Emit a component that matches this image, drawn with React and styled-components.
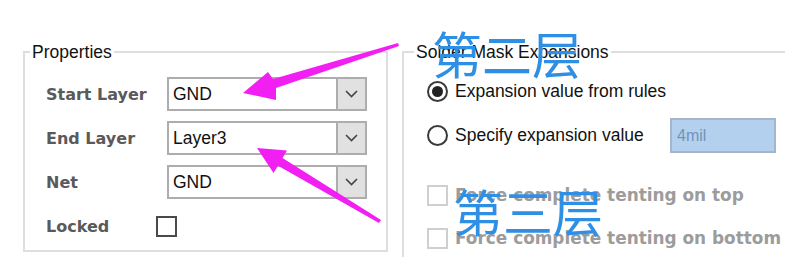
import React from 'react';
import styled, { createGlobalStyle } from 'styled-components';

const GlobalStyle = createGlobalStyle`
	html, body {
		margin: 0;
		padding: 0;
		background: #ffffff;
	}
	body {
		font-family: "Liberation Sans", Arial, sans-serif;
		overflow: hidden;
	}
`;

const Page = styled.div`
	position: relative;
	width: 785px;
	height: 264px;
	display: flex;
	gap: 14px;
	padding: 51px 0 0 23px;
	box-sizing: border-box;
	overflow: hidden;
`;

const GroupBox = styled.div`
	flex: none;
	display: flex;
	flex-direction: column;
	box-sizing: border-box;
	width: ${p => p.width}px;
	height: ${p => p.height}px;
	border: 2px solid #dedede;
	border-right: ${p => (p.open ? 'none' : '2px solid #dedede')};
	border-bottom: ${p => (p.open ? 'none' : '2px solid #dedede')};
`;

const GroupTitle = styled.div`
	align-self: flex-start;
	margin: -11px 0 0 ${p => p.offset}px;
	padding: 0 2px;
	height: 20px;
	line-height: 20px;
	background: #ffffff;
	color: #111111;
	font-size: 17.5px;
`;

const Rows = styled.div`
	display: flex;
	flex-direction: column;
	gap: 10px;
	margin-top: ${p => p.top}px;
	padding-left: ${p => p.inset}px;
`;

const Row = styled.div`
	display: flex;
	align-items: center;
	height: 34px;
	margin-top: ${p => p.extra || 0}px;
`;

const FieldLabel = styled.div`
	width: ${p => p.width}px;
	flex: none;
	color: #5a5a5a;
	font-family: "DejaVu Sans", Verdana, sans-serif;
	font-weight: bold;
	font-size: 16px;
`;

const Combo = styled.div`
	display: flex;
	box-sizing: border-box;
	width: 200px;
	height: 34px;
	border: 2px solid #adadad;
	background: #ffffff;
`;

const ComboValue = styled.div`
	flex: 1;
	padding-left: 4px;
	line-height: 30px;
	font-size: 17.5px;
	color: #111111;
`;

const ComboButton = styled.div`
	width: 27px;
	display: flex;
	align-items: center;
	justify-content: center;
	background: #e1e1e1;
	border-left: 2px solid #adadad;
`;

const CheckBox = styled.div`
	box-sizing: border-box;
	width: 21px;
	height: 21px;
	flex: none;
	border: 2px solid ${p => (p.disabled ? '#cfcfcf' : '#4a4a4a')};
	background: #ffffff;
`;

const Radio = styled.div`
	box-sizing: border-box;
	width: 21px;
	height: 21px;
	flex: none;
	border-radius: 50%;
	border: 2px solid #3a3a3a;
	display: flex;
	align-items: center;
	justify-content: center;

	&::after {
		content: '';
		width: 11px;
		height: 11px;
		border-radius: 50%;
		background: ${p => (p.checked ? '#222222' : 'transparent')};
	}
`;

const OptionText = styled.div`
	margin-left: 7px;
	min-width: ${p => p.minWidth || 0}px;
	font-size: 17.5px;
	color: #111111;
`;

const DisabledText = styled.div`
	margin-left: 7px;
	color: #9c9c9c;
	font-family: "DejaVu Sans", Verdana, sans-serif;
	font-weight: bold;
	font-size: 16.9px;
	white-space: nowrap;
`;

const ValueInput = styled.div`
	box-sizing: border-box;
	width: 106px;
	height: 35px;
	padding-left: 5px;
	line-height: 31px;
	border: 2px solid #a3b6cc;
	background: #b3d1ef;
	color: #7392b8;
	font-size: 16px;
`;

const Overlay = styled.svg`
	position: absolute;
	left: 0;
	top: 0;
	pointer-events: none;
`;

const Note = styled.div`
	position: absolute;
	left: ${p => p.x}px;
	top: ${p => p.y}px;
	font-family: "Noto Sans CJK SC", sans-serif;
	font-size: 50px;
	line-height: 50px;
	color: #2f8fe4;
	white-space: nowrap;
	pointer-events: none;
`;

const Chevron = () => (
	<svg width="13" height="8" viewBox="0 0 13 8">
		<path d="M1 1 L6.5 6.5 L12 1" fill="none" stroke="#444" strokeWidth="1.6" />
	</svg>
);

const fields = [
	{ label: 'Start Layer', value: 'GND' },
	{ label: 'End Layer', value: 'Layer3' },
	{ label: 'Net', value: 'GND' }
];

export default function App() {
	return (
		<>
			<GlobalStyle />
			<Page>
				<GroupBox width={365} height={201}>
					<GroupTitle offset={5}>Properties</GroupTitle>
					<Rows top={15} inset={21}>
						{fields.map(f => (
							<Row key={f.label}>
								<FieldLabel width={121}>{f.label}</FieldLabel>
								<Combo>
									<ComboValue>{f.value}</ComboValue>
									<ComboButton><Chevron /></ComboButton>
								</Combo>
							</Row>
						))}
						<Row>
							<FieldLabel width={110}>Locked</FieldLabel>
							<CheckBox />
						</Row>
					</Rows>
				</GroupBox>

				<GroupBox width={400} height={206} open>
					<GroupTitle offset={10}>Solder Mask Expansions</GroupTitle>
					<Rows top={12} inset={23}>
						<Row>
							<Radio checked />
							<OptionText>Expansion value from rules</OptionText>
						</Row>
						<Row>
							<Radio />
							<OptionText minWidth={215}>Specify expansion value</OptionText>
							<ValueInput>4mil</ValueInput>
						</Row>
						<Row extra={16}>
							<CheckBox disabled />
							<DisabledText>Force complete tenting on top</DisabledText>
						</Row>
						<Row extra={-1}>
							<CheckBox disabled />
							<DisabledText>Force complete tenting on bottom</DisabledText>
						</Row>
					</Rows>
				</GroupBox>

				<Overlay width="785" height="264" viewBox="0 0 785 264">
					<polygon points="398,43 273,79 268,72 243,93 276,100 276,88 399,46" fill="#f21ff2" />
					<polygon points="381,220 282.5,158 287,150.5 257,148 273.5,173 278,165.7 379,223" fill="#f21ff2" />
				</Overlay>
				<Note x={432} y={27}>第二层</Note>
				<Note x={453} y={185}>第三层</Note>
			</Page>
		</>
	);
}
